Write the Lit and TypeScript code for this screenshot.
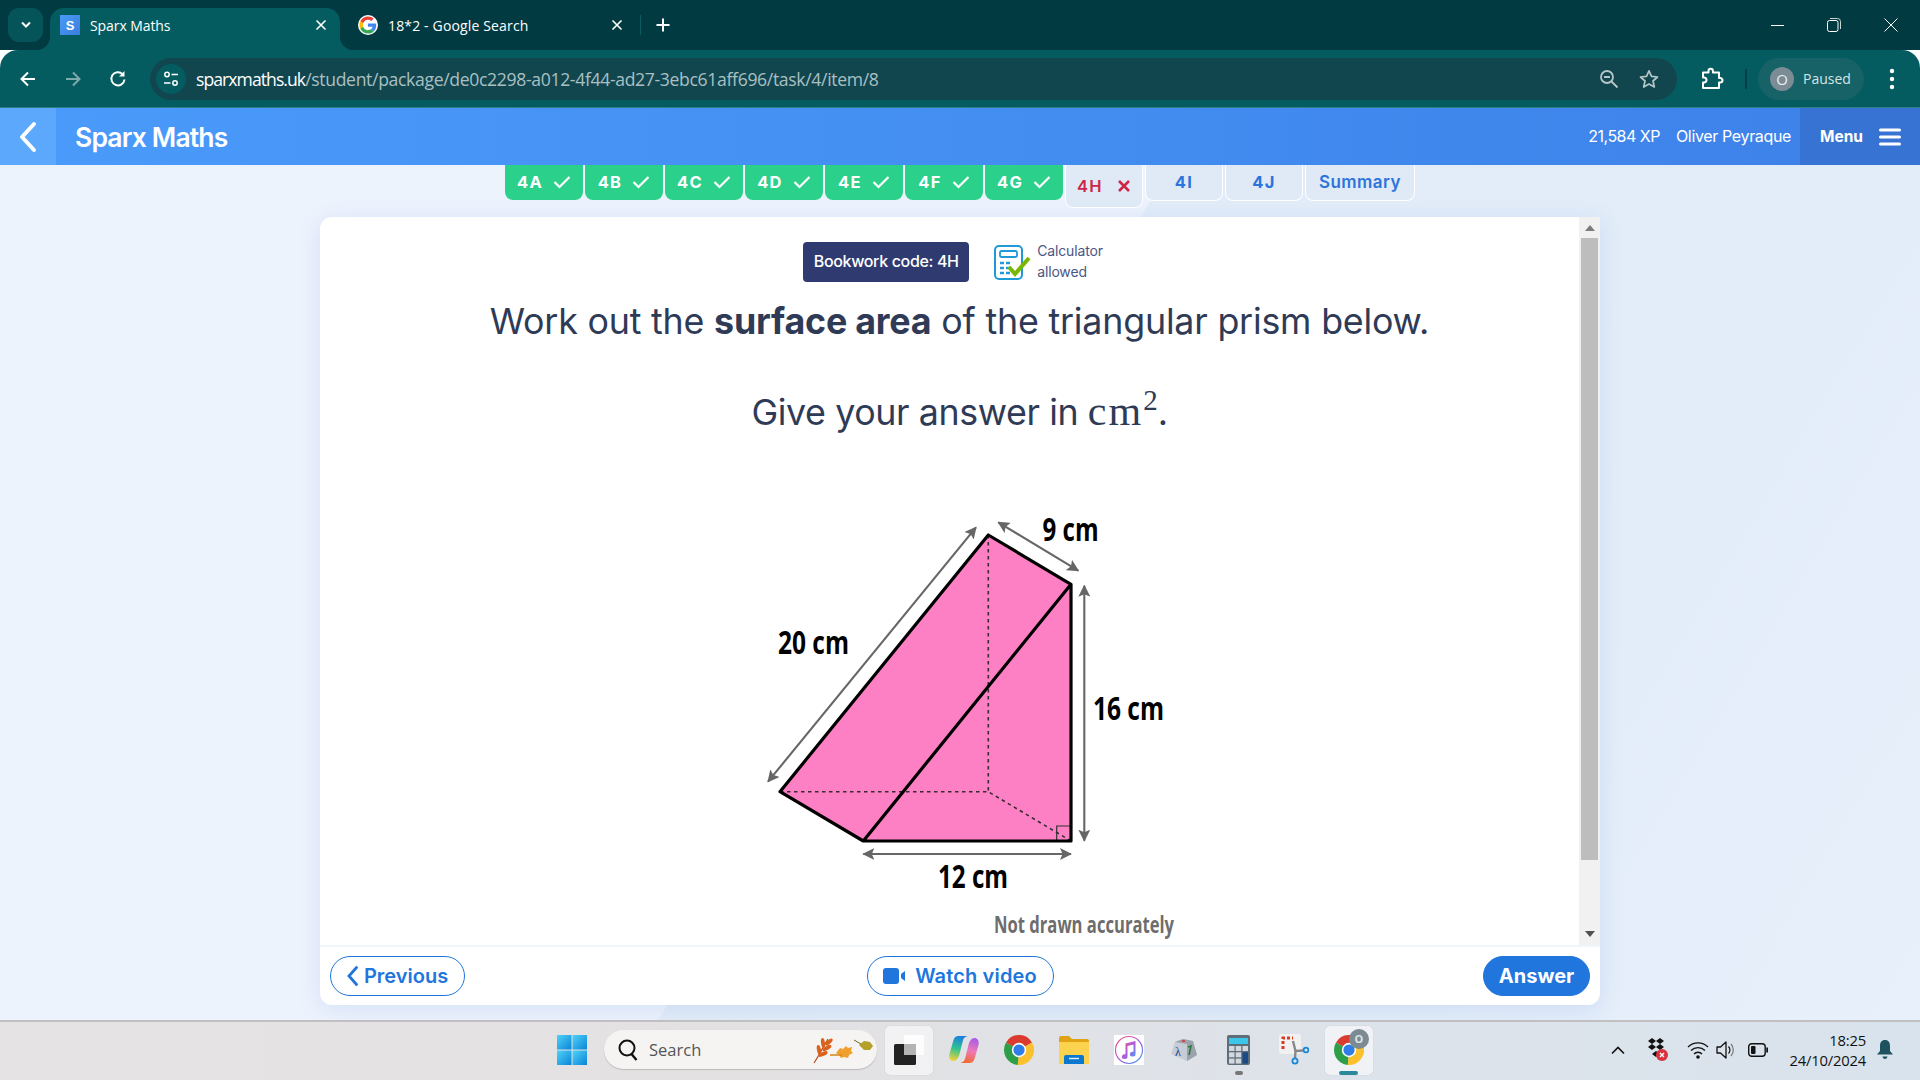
import { LitElement, html, css, svg } from "lit";
import { customElement } from "lit/decorators.js";

const CHROME_FONT = css`"Open Sans", "Noto Sans", sans-serif`;

const chromeLogo = (size: number) => html`<svg width=${size} height=${size} viewBox="0 0 48 48">
  <path fill="#db3b2f" d="M24 24 3.2 12A24 24 0 0 1 44.8 12Z"/>
  <path fill="#fbc02d" d="M24 24 44.8 12A24 24 0 0 1 22 47.9Z"/>
  <path fill="#2e9e48" d="M24 24 22 47.9A24 24 0 0 1 3.2 12Z"/>
  <circle cx="24" cy="24" r="11.5" fill="#fff"/><circle cx="24" cy="24" r="9" fill="#2f7de8"/></svg>`;

const googleG = html`<svg width="20" height="20" viewBox="-4 -4 56 56">
  <circle cx="24" cy="24" r="28" fill="#fff"/>
  <path fill="#EA4335" d="M24 9.5c3.54 0 6.71 1.22 9.21 3.6l6.85-6.85C35.9 2.38 30.47 0 24 0 14.62 0 6.51 5.38 2.56 13.22l7.98 6.19C12.43 13.72 17.74 9.5 24 9.5z"/>
  <path fill="#4285F4" d="M46.98 24.55c0-1.57-.15-3.09-.38-4.55H24v9.02h12.94c-.58 2.96-2.26 5.48-4.78 7.18l7.73 6c4.51-4.18 7.09-10.36 7.09-17.65z"/>
  <path fill="#FBBC05" d="M10.53 28.59c-.48-1.45-.76-2.99-.76-4.59s.27-3.14.76-4.59l-7.98-6.19C.92 16.46 0 20.12 0 24c0 3.88.92 7.54 2.56 10.78l7.97-6.19z"/>
  <path fill="#34A853" d="M24 48c6.48 0 11.93-2.13 15.89-5.81l-7.73-6c-2.15 1.45-4.92 2.3-8.16 2.3-6.26 0-11.57-4.22-13.47-9.91l-7.98 6.19C6.51 42.62 14.62 48 24 48z"/></svg>`;

const closeX = html`<svg width="12" height="12" viewBox="0 0 12 12"><path d="M1.5 1.5l9 9M10.5 1.5l-9 9" stroke="#fff" stroke-width="1.6" fill="none"/></svg>`;
const check = html`<svg width="18" height="14" viewBox="0 0 18 14"><path d="M1.5 7l5 5 10-10" stroke="#fff" stroke-width="2.2" fill="none"/></svg>`;

const arrowHead = svg`<marker id="ah" viewBox="0 0 12 12" refX="11" refY="6" markerWidth="12" markerHeight="12" markerUnits="userSpaceOnUse" orient="auto-start-reverse"><path d="M0 0 12 6 0 12 2.5 6Z" fill="#666"/></marker>`;

@customElement("app-root")
export class AppRoot extends LitElement {
  static styles = css`
    :host { display: block; width: 1920px; height: 1080px; overflow: hidden; font-family: Inter, "Liberation Sans", sans-serif; }
    * { box-sizing: border-box; }
    .page { width: 1920px; height: 1080px; display: flex; flex-direction: column; }
    svg { display: block; flex: none; }

    /* browser chrome */
    .strip { height: 50px; background: #023a42; display: flex; padding-top: 8px; color: #fff; font-family: ${CHROME_FONT}; font-size: 14px; flex: none; }
    .tabs-btn { width: 35px; height: 34px; margin-left: 8px; margin-right: 7px; background: #045459; border-radius: 11px; display: flex; align-items: center; justify-content: center; }
    .btab { width: 290px; height: 42px; display: flex; align-items: center; position: relative; padding: 0 13px 8px 10px; }
    .btab.on { background: #045c60; border-radius: 14px 14px 0 0; }
    .btab.on::before, .btab.on::after { content: ""; position: absolute; bottom: 0; width: 14px; height: 14px; }
    .btab.on::before { left: -14px; background: radial-gradient(circle at 0 0, transparent 14px, #045c60 14.5px); }
    .btab.on::after { right: -14px; background: radial-gradient(circle at 100% 0, transparent 14px, #045c60 14.5px); }
    .btab.two { width: 300px; padding: 0 17px 8px 18px; }
    .btab .label { margin-left: 10px; flex: 1; white-space: nowrap; letter-spacing: -0.08px; }
    .btab.two .label { letter-spacing: .15px; }
    .favs { width: 20px; height: 20px; background: linear-gradient(135deg,#4a9bf5,#3a7de0); color: #fff; font: 700 13px "Liberation Sans", sans-serif; display: flex; align-items: center; justify-content: center; }
    .tsep { width: 1px; height: 20px; background: #0d5a62; margin-top: 7px; }
    .plus { margin-left: 14px; height: 34px; display: flex; align-items: center; }
    .winctl { margin-left: auto; display: flex; height: 34px; align-items: center; padding-right: 22px; }
    .winctl svg { margin-left: 42px; }
    .winctl svg.cl { margin-left: 43px; }

    .toolbar { height: 58px; background: #045c60; border-radius: 18px 18px 0 0; border-bottom: 1px solid #2f7e85; display: flex; align-items: center; padding-left: 5px; color: #fff; font-family: ${CHROME_FONT}; flex: none; }
    .nav { width: 45px; display: flex; justify-content: center; }
    .omni { flex: 1; height: 42px; margin-left: 10px; background: #12464f; border-radius: 21px; display: flex; align-items: center; padding: 0 13px 0 6px; }
    .info { width: 30px; height: 30px; border-radius: 50%; background: #045c60; display: flex; align-items: center; justify-content: center; }
    .url { margin-left: 10px; padding-top: 1px; font-size: 17.6px; letter-spacing: -0.34px; color: #a9c0c3; white-space: nowrap; flex: 1; }
    .url b { font-weight: 400; color: #fff; letter-spacing: -0.95px; }
    .omni svg.o { margin-left: 14px; }
    .omni svg.star { margin-left: 20px; margin-right: 5px; }
    .tright { width: 243px; display: flex; align-items: center; padding-left: 23px; flex: none; }
    .vsep { width: 2px; height: 20px; background: #033f47; margin-left: 21px; margin-right: 11px; }
    .pill { width: 106px; height: 42px; background: #176267; border-radius: 21px; display: flex; align-items: center; padding-left: 12px; font-size: 14px; color: #d4e4e4; }
    .avatar { width: 24px; height: 24px; border-radius: 50%; background: #7b8c96; color: #e8eef0; display: flex; align-items: center; justify-content: center; font-size: 15px; margin-right: 9px; }
    .dots { margin-left: 25px; }

    /* app header */
    .header { height: 57px; flex: none; display: flex; align-items: center; color: #fff; background: linear-gradient(90deg, #4a9bfb, #3d81e8); }
    .hback { width: 56px; height: 57px; background: #5ba8fd; display: flex; align-items: center; justify-content: center; }
    .htitle { margin-left: 19px; font-size: 26.5px; font-weight: 600; letter-spacing: -0.85px; }
    .xp { margin-left: auto; font-size: 16px; letter-spacing: -0.5px; padding-bottom: 1px; }
    .who { margin-left: 16px; margin-right: 9px; font-size: 16px; letter-spacing: -0.35px; padding-bottom: 1px; }
    .menu { width: 120px; height: 57px; background: #3773d3; display: flex; align-items: center; padding-left: 20px; font-size: 15.5px; font-weight: 700; }
    .menu svg { margin-left: 16px; }

    /* main */
    .main { flex: 1; min-height: 0; display: flex; flex-direction: column; align-items: center; background: linear-gradient(121deg, #edf3fd 0%, #edf3fd 48.1%, #e2ecf8 48.2%, #e3edf9 80%, #e8f0fb 100%); }
    .qtabs { height: 52px; flex: none; display: flex; gap: 2px; align-items: flex-start; }
    .qt { width: 78px; height: 35px; border-radius: 0 0 8px 8px; display: flex; align-items: center; justify-content: center; gap: 10px; font-size: 16.5px; font-weight: 700; letter-spacing: 1.3px; }
    .qt.done { background: #2bd08a; color: #fff; padding-bottom: 2px; }
    .qt.todo { background: #dfeaf6; color: #2c74dc; height: 36px; border: 1px solid #fff; border-top: none; padding-bottom: 2px; }
    .qt.sum { width: 110px; letter-spacing: .45px; font-weight: 600; font-size: 17px; }
    .qt.act { background: #dfeaf6; color: #cf2547; height: 43px; border: 1px solid #fff; border-top: none; gap: 14px; font-weight: 600; }

    .card { width: 1280px; height: 788px; flex: none; background: #fff; border-radius: 12px 0 12px 12px; box-shadow: 0 4px 22px rgba(90,130,220,.16); display: flex; flex-direction: column; overflow: hidden; }
    .scrollwrap { height: 728px; flex: none; display: flex; }
    .content { flex: 1; min-width: 0; padding: 25px 0 0 20px; display: flex; flex-direction: column; align-items: center; color: #2f3b56; }
    .meta { height: 40px; flex: none; display: flex; align-items: center; margin-right: 13px; }
    .code { width: 166px; height: 40px; background: #2f3b70; border-radius: 4px; color: #fff; font-size: 16px; font-weight: 500; letter-spacing: -0.35px; display: flex; align-items: center; justify-content: center; padding-bottom: 2px; }
    .calc { margin-left: 25px; }
    .calctxt { margin-left: 6px; font-size: 14px; line-height: 21px; color: #4c5684; letter-spacing: -0.15px; padding-bottom: 2px; }
    .q { margin: 0; font-size: 35.8px; line-height: 46px; white-space: nowrap; letter-spacing: -0.2px; font-weight: 400; }
    .q.one { margin-top: 16px; }
    .q.two { margin-top: 44px; letter-spacing: -0.4px; }
    .q b { font-weight: 700; }
    .math { font-family: "Liberation Serif", serif; font-size: 42px; letter-spacing: 2px; }
    .math sup { font-size: 29px; line-height: 0; vertical-align: 15px; letter-spacing: 0; }
    .fig { margin: 65px 0 0 101px; }
    .fig text { font-family: "Open Sans", sans-serif; font-weight: 700; }

    .sbar { width: 21px; flex: none; background: #f1f1f1; display: flex; flex-direction: column; align-items: center; }
    .sbar .up, .sbar .dn { height: 21px; display: flex; align-items: center; justify-content: center; flex: none; }
    .thumb { width: 17px; height: 622px; background: #bdbdbd; flex: none; }
    .sbar .dn { margin-top: auto; height: 22px; }

    .foot { height: 60px; flex: none; border-top: 2px solid #f0f4fc; display: grid; grid-template-columns: 1fr auto 1fr; align-items: center; padding: 0 10px; font-size: 20px; font-weight: 600; }
    .btn { height: 40px; border: 1px solid #2076dd; border-radius: 20px; color: #2076dd; display: flex; align-items: center; justify-content: center; background: #fff; }
    .prev { width: 135px; gap: 6px; justify-self: start; }
    .watch { width: 187px; gap: 9px; letter-spacing: .15px; }
    .ans { width: 107px; background: #2076dd; color: #fff; justify-self: end; font-weight: 700; }

    /* taskbar */
    .task { height: 60px; flex: none; border-top: 2px solid #c0c0c2; background: linear-gradient(90deg, #e5e3e3 0%, #e3e1e2 40%, #dde3ea 70%, #d9e3ed 100%); display: flex; align-items: center; padding: 0 0 3px 557px; font-family: ${CHROME_FONT}; color: #111; }
    .search { width: 273px; height: 39px; margin-left: 17px; margin-right: 4px; background: #f6f4f3; border-radius: 20px; box-shadow: 0 1px 1px rgba(0,0,0,.18); display: flex; align-items: center; padding-left: 14px; font-size: 16.5px; color: #555; position: relative; }
    .search span { margin-left: 11px; }
    .search svg.lf { position: absolute; right: 3px; top: 6px; }
    .slot { width: 55px; height: 58px; display: flex; align-items: center; justify-content: center; position: relative; flex: none; }
    .slot.tile::before { content: ""; position: absolute; left: 3.5px; right: 3.5px; top: 5px; bottom: 4px; background: rgba(255,255,255,.55); border-radius: 5px; box-shadow: 0 0 1px rgba(0,0,0,.2); }
    .slot svg { position: relative; }
    .run { position: absolute; left: 23.5px; bottom: 4px; width: 8px; height: 4px; border-radius: 2px; background: #777; }
    .run.act { left: 18px; width: 19px; background: #2a8a9a; }
    .badge { position: absolute; left: 28px; top: 8px; width: 20px; height: 20px; border-radius: 50%; background: #7c8a92; color: #dde5e8; font: 700 11px "Open Sans", sans-serif; display: flex; align-items: center; justify-content: center; }
    .tray { margin-left: auto; margin-right: 23px; display: flex; align-items: center; height: 55px; }
    .ti { display: flex; align-items: center; justify-content: center; flex: none; }
    .ti.w40 { width: 40px; }
    .ti.w28 { width: 28px; }
    .ti.wifi { margin-left: 6px; }
    .ti.bat { margin-left: 4px; }
    .ti.bell { width: 24px; margin-left: 7px; }
    .clock { width: 94px; text-align: right; font-size: 14.8px; line-height: 20px; letter-spacing: -0.2px; color: #111; }
  `;

  private tab(name: string) {
    return html`<div class="qt done">${name}${check}</div>`;
  }

  render() {
    return html`<div class="page">
      <div class="strip">
        <div class="tabs-btn"><svg width="12" height="8" viewBox="0 0 12 8"><path d="M2 1.5l4 4 4-4" stroke="#fff" stroke-width="2" fill="none"/></svg></div>
        <div class="btab on"><div class="favs">S</div><div class="label">Sparx Maths</div>${closeX}</div>
        <div class="btab two">${googleG}<div class="label">18*2 - Google Search</div>${closeX}</div>
        <div class="tsep"></div>
        <div class="plus"><svg width="16" height="16" viewBox="0 0 16 16"><path d="M8 1.500v13M1.500 8h13" stroke="#fff" stroke-width="2" fill="none"/></svg></div>
        <div class="winctl">
          <svg width="14" height="14" viewBox="0 0 14 14"><path d="M0 7.500h13" stroke="#fff" fill="none"/></svg>
          <svg width="14" height="14" viewBox="0 0 14 14"><rect x=".5" y="2.500" width="10.500" height="11" rx="2" stroke="#fff" fill="none"/><path d="M3 .5h7.500a3 3 0 0 1 3 3V11" stroke="#c9d6d6" fill="none"/></svg>
          <svg class="cl" width="14" height="14" viewBox="0 0 14 14"><path d="M.5.5l13 13M13.500.5l-13 13" stroke="#fff" fill="none"/></svg>
        </div>
      </div>

      <div class="toolbar">
        <div class="nav"><svg width="18" height="18" viewBox="0 0 18 18"><path d="M16 9H2.500M9 2.500 2.500 9 9 15.500" stroke="#fff" stroke-width="2" fill="none"/></svg></div>
        <div class="nav"><svg width="18" height="18" viewBox="0 0 18 18"><path d="M2 9h13.500M9 2.500 15.500 9 9 15.500" stroke="#7faaac" stroke-width="2" fill="none"/></svg></div>
        <div class="nav"><svg width="18" height="18" viewBox="0 0 18 18"><path d="M15.500 9.500A6.600 6.600 0 1 1 13.500 4" stroke="#fff" stroke-width="2" fill="none"/><path d="M15.500 1v5.500H10z" fill="#fff"/></svg></div>
        <div class="omni">
          <div class="info"><svg width="16" height="16" viewBox="0 0 16 16"><circle cx="4" cy="3.500" r="2.200" stroke="#fff" stroke-width="1.500" fill="none"/><path d="M8.500 3.500H15M1 12h6.500" stroke="#fff" stroke-width="1.500"/><circle cx="12" cy="12" r="2.200" stroke="#fff" stroke-width="1.500" fill="none"/></svg></div>
          <div class="url"><b>sparxmaths.uk</b>/student/package/de0c2298-a012-4f44-ad27-3ebc61aff696/task/4/item/8</div>
          <svg class="o" width="20" height="20" viewBox="0 0 20 20"><circle cx="8" cy="8" r="6" stroke="#b5c6c7" stroke-width="1.800" fill="none"/><path d="M5 8h6M12.500 12.500 18.500 18.500" stroke="#b5c6c7" stroke-width="1.800"/></svg>
          <svg class="o star" width="20" height="20" viewBox="0 0 20 20"><path d="M10 1.800l2.500 5.500 6 .7-4.500 4 1.300 6L10 15l-5.300 3 1.300-6-4.500-4 6-.7z" stroke="#b5c6c7" stroke-width="1.700" fill="none" stroke-linejoin="round"/></svg>
        </div>
        <div class="tright">
          <svg width="24" height="24" viewBox="0 0 24 24"><path d="M3 5.500h5.500V4a2.200 2.200 0 0 1 4.400 0v1.500H19V11h1.200a2.300 2.300 0 0 1 0 4.600H19V21H3v-5.500h1.400a2.600 2.600 0 0 0 0-5.100H3z" stroke="#fff" stroke-width="2" fill="none" stroke-linejoin="round"/></svg>
          <div class="vsep"></div>
          <div class="pill"><div class="avatar">O</div>Paused</div>
          <svg class="dots" width="6" height="22" viewBox="0 0 6 22"><circle cx="3" cy="3" r="2.200" fill="#fff"/><circle cx="3" cy="11" r="2.200" fill="#fff"/><circle cx="3" cy="19" r="2.200" fill="#fff"/></svg>
        </div>
      </div>

      <div class="header">
        <div class="hback"><svg width="18" height="32" viewBox="0 0 18 32"><path d="M15 3 3 16l12 13" stroke="#fff" stroke-width="4" stroke-linecap="round" stroke-linejoin="round" fill="none"/></svg></div>
        <div class="htitle">Sparx Maths</div>
        <div class="xp">21,584 XP</div>
        <div class="who">Oliver Peyraque</div>
        <div class="menu">Menu<svg width="22" height="18" viewBox="0 0 22 18"><path d="M1.500 2h19M1.500 9h19M1.500 16h19" stroke="#fff" stroke-width="3" stroke-linecap="round"/></svg></div>
      </div>

      <div class="main">
        <div class="qtabs">
          ${["4A","4B","4C","4D","4E","4F","4G"].map((n) => this.tab(n))}
          <div class="qt act">4H<svg width="14" height="14" viewBox="0 0 14 14"><path d="M2 2l10 10M12 2 2 12" stroke="#cf2547" stroke-width="2.600"/></svg></div>
          <div class="qt todo">4I</div>
          <div class="qt todo">4J</div>
          <div class="qt todo sum">Summary</div>
        </div>

        <div class="card">
          <div class="scrollwrap">
            <div class="content">
              <div class="meta">
                <div class="code">Bookwork code: 4H</div>
                <svg class="calc" width="37" height="35" viewBox="0 0 37 35">
                  <rect x="1" y="1" width="27" height="33" rx="4" fill="#fff" stroke="#1f9ad6" stroke-width="2"/>
                  <rect x="6" y="6" width="17" height="6" rx="1.500" fill="none" stroke="#1f9ad6" stroke-width="1.800"/>
                  <path d="M6 18h4M12 18h4M6 23h4M12 23h4M6 28h4M12 28h4" stroke="#1f9ad6" stroke-width="2.500"/>
                  <path d="M15 22l6 7L35 13" stroke="#7ab800" stroke-width="4" fill="none"/>
                </svg>
                <div class="calctxt">Calculator<br>allowed</div>
              </div>
              <p class="q one">Work out the <b>surface area</b> of the triangular prism below.</p>
              <p class="q two">Give your answer in <span class="math">cm<sup>2</sup></span>.</p>
              <svg class="fig" width="500" height="445" viewBox="760 500 500 445">
                <defs>${arrowHead}</defs>
                <path d="M988.300 535 1071 584.300V841H863.300L780 791.700Z" fill="#fd80c5"/>
                <path d="M988.300 535V791.700M780 791.700H988.300L1071 841" stroke="#3a2a33" stroke-width="1.600" stroke-dasharray="3.500 3.500" fill="none"/>
                <path d="M1056.700 841V826H1070" stroke="#333" stroke-width="1.200" fill="none"/>
                <path d="M988.300 535 1071 584.300V841H863.300L780 791.700ZM1071 584.300 863.300 841" stroke="#000" stroke-width="3.200" stroke-linejoin="round" fill="none"/>
                <g stroke="#666" stroke-width="2.100" fill="none">
                  <path d="M768 781.700 976 527.300" marker-start="url(#ah)" marker-end="url(#ah)"/>
                  <path d="M998.300 522.300 1078.300 570.700" marker-start="url(#ah)" marker-end="url(#ah)"/>
                  <path d="M1084.300 585.700V840.700" marker-start="url(#ah)" marker-end="url(#ah)"/>
                  <path d="M863.300 854H1071" marker-start="url(#ah)" marker-end="url(#ah)"/>
                </g>
                <g fill="#000" font-size="32">
                  <text x="1042.500" y="540.700" textLength="56" lengthAdjust="spacingAndGlyphs">9 cm</text>
                  <text x="778" y="654" textLength="71" lengthAdjust="spacingAndGlyphs">20 cm</text>
                  <text x="1093" y="720" textLength="71" lengthAdjust="spacingAndGlyphs">16 cm</text>
                  <text x="938" y="888" textLength="70" lengthAdjust="spacingAndGlyphs">12 cm</text>
                </g>
                <text x="994" y="933" font-size="23" fill="#6d6d6d" textLength="180" lengthAdjust="spacingAndGlyphs">Not drawn accurately</text>
              </svg>
            </div>
            <div class="sbar">
              <div class="up"><svg width="10" height="6" viewBox="0 0 10 6"><path d="M5 0l5 6H0z" fill="#7b7b7b"/></svg></div>
              <div class="thumb"></div>
              <div class="dn"><svg width="10" height="6" viewBox="0 0 10 6"><path d="M0 0h10L5 6z" fill="#505050"/></svg></div>
            </div>
          </div>
          <div class="foot">
            <div class="btn prev"><svg width="11" height="20" viewBox="0 0 11 20"><path d="M9.500 1.500 2 10l7.500 8.500" stroke="#2076dd" stroke-width="2.800" fill="none" stroke-linecap="round"/></svg>Previous</div>
            <div class="btn watch"><svg width="23" height="16" viewBox="0 0 23 16"><rect width="16" height="16" rx="3" fill="#2076dd"/><path d="M18 6l4-3v10l-4-3z" fill="#2076dd"/></svg>Watch video</div>
            <div class="btn ans">Answer</div>
          </div>
        </div>
      </div>

      <div class="task">
        <svg width="30" height="30" viewBox="0 0 30 30"><defs><linearGradient id="w" x1="0" y1="0" x2="1" y2="1"><stop offset="0" stop-color="#4fd3f7"/><stop offset="1" stop-color="#0a84d8"/></linearGradient></defs><rect width="14.500" height="14.500" fill="url(#w)"/><rect x="15.500" width="14.500" height="14.500" fill="url(#w)"/><rect y="15.500" width="14.500" height="14.500" fill="url(#w)"/><rect x="15.500" y="15.500" width="14.500" height="14.500" fill="url(#w)"/></svg>
        <div class="search">
          <svg width="20" height="22" viewBox="0 0 20 22"><circle cx="9" cy="9" r="7.500" stroke="#111" stroke-width="2" fill="none"/><path d="M13.500 15 18.500 21" stroke="#111" stroke-width="2.400"/></svg>
          <span>Search</span>
          <svg class="lf" width="62" height="28" viewBox="0 0 62 28">
            <path d="M2 27C8 18 11 11 16 3" stroke="#b8481a" stroke-width="1.200" fill="none"/>
            <g fill="#d9631e"><ellipse cx="11" cy="7" rx="2" ry="5" transform="rotate(-8 11 7)"/><ellipse cx="7" cy="14" rx="2" ry="5" transform="rotate(-12 7 14)"/><ellipse cx="17" cy="6" rx="2" ry="4.500" transform="rotate(50 17 6)"/><ellipse cx="15" cy="12" rx="2" ry="5" transform="rotate(60 15 12)"/><ellipse cx="11" cy="18" rx="2" ry="5" transform="rotate(65 11 18)"/></g>
            <path d="M24 17l4-5 3 1 3-3 2 2 4-1-1 4 2 2-4 2-1 3-4-1-3 1-2-3z" fill="#f0a02c"/><path d="M18 19h12" stroke="#d9841c" stroke-width="1.500"/>
            <path d="M47 9l5-4 6 1 3 4-3 4-6 0z" fill="#b5a02a"/><path d="M42 4l7 4" stroke="#6f6a1a"/>
          </svg>
        </div>
        <div class="slot tile"><svg width="30" height="30" viewBox="0 0 30 30"><rect x="10" y="0" width="20" height="20" fill="#fff" opacity=".85"/><rect x="0" y="9" width="22" height="21" rx="1.500" fill="#222"/><rect x="10" y="9" width="12" height="11" fill="#b4b4b4"/></svg></div>
        <div class="slot"><svg width="30" height="27" viewBox="0 0 30 27"><defs><linearGradient id="c1" x1=".5" y1="0" x2=".3" y2="1"><stop offset="0" stop-color="#1b7fe0"/><stop offset=".5" stop-color="#2fc28f"/><stop offset="1" stop-color="#f0d23a"/></linearGradient><linearGradient id="c2" x1=".6" y1="0" x2=".4" y2="1"><stop offset="0" stop-color="#a85be6"/><stop offset=".5" stop-color="#ee78b8"/><stop offset="1" stop-color="#f26b2e"/></linearGradient></defs>
          <path d="M9.500 0H19C15.500.5 14.500 2.500 13.800 5L10.500 18c-.9 4-3 7-6 7C1.200 25-.5 21.500.6 17.500L4.500 4C5.300 1.500 7 0 9.500 0z" fill="url(#c1)"/>
          <path d="M20.500 27H11c3.500-.5 4.500-2.500 5.200-5l3.300-13c.9-4 3-7 6-7 3.300 0 5 3.500 3.900 7.500L25.500 23c-.8 2.500-2.500 4-5 4z" fill="url(#c2)"/></svg></div>
        <div class="slot">${chromeLogo(30)}</div>
        <div class="slot"><svg width="30" height="28" viewBox="0 0 30 28"><path d="M0 2a2 2 0 0 1 2-2h8l3 3h15a2 2 0 0 1 2 2v4H0z" fill="#e0a315"/><path d="M0 6h30v22H0z" fill="#fcd34f"/><path d="M5 21a2 2 0 0 1 2-2h16a2 2 0 0 1 2 2v7H5z" fill="#0a78d0"/><path d="M10 22.500h10" stroke="#e4f2ff" stroke-width="1.400"/></svg></div>
        <div class="slot"><svg width="30" height="30" viewBox="0 0 30 30"><defs><linearGradient id="it" x1="0" y1="0" x2="1" y2="1"><stop offset="0" stop-color="#f5566f"/><stop offset=".5" stop-color="#b15ae0"/><stop offset="1" stop-color="#3aa4f4"/></linearGradient></defs><rect width="30" height="30" fill="#fff"/><circle cx="15" cy="15" r="13.500" fill="none" stroke="url(#it)" stroke-width="1.200"/><path d="M11.500 8.500 21.500 6V19a2.800 2.400 0 1 1-2-2.200V9.500l-6 1.500V21.500a2.800 2.400 0 1 1-2-2.200z" fill="url(#it)"/></svg></div>
        <div class="slot"><svg width="28" height="24" viewBox="0 0 28 24"><path d="M1 16 5 4l8-3 10 2 4 14-10 6z" fill="#c5ccd6"/><path d="M5 4l8-3 10 2-6 3zM17 6l6-3 4 14-10 6z" fill="#9aa3ad"/><text x="5" y="18" font-size="12" fill="#23408f" font-family="'Liberation Serif',serif">λ</text><path d="M18 9l3-1-2 9" stroke="#2f7a3a" stroke-width="1.600" fill="none"/><path d="M12 3h3" stroke="#c33" stroke-width="1.500"/></svg></div>
        <div class="slot"><svg width="23" height="30" viewBox="0 0 23 30"><rect width="23" height="30" rx="2" fill="#5f6d79"/><rect x="2" y="3" width="19" height="6" fill="#3cc7ea"/><g fill="#d2d8de"><rect x="2" y="11" width="5.500" height="5"/><rect x="8.700" y="11" width="5.500" height="5"/><rect x="15.500" y="11" width="5.500" height="5"/><rect x="2" y="17.300" width="5.500" height="5"/><rect x="8.700" y="17.300" width="5.500" height="5"/><rect x="2" y="23.600" width="5.500" height="5"/><rect x="8.700" y="23.600" width="5.500" height="5"/></g><rect x="15.500" y="17.300" width="5.500" height="11.300" fill="#1a4a8a"/></svg><div class="run"></div></div>
        <div class="slot"><svg width="30" height="32" viewBox="0 0 30 32"><rect x="0" y="0" width="22" height="20" rx="3" fill="#f1f1f1"/><path d="M4 15V4h10" stroke="#d9381e" stroke-width="3" stroke-dasharray="3 2" fill="none"/><path d="M14 7 16.500 17 16 24M16.500 17 24 16.500" stroke="#888" stroke-width="2.400" fill="none"/><circle cx="27" cy="16" r="2.400" fill="none" stroke="#1b87d6" stroke-width="1.800"/><circle cx="16" cy="27" r="2.600" fill="none" stroke="#1b87d6" stroke-width="1.800"/></svg></div>
        <div class="slot tile">${chromeLogo(30)}<div class="badge">O</div><div class="run act"></div></div>

        <div class="tray">
          <div class="ti w40"><svg width="16" height="10" viewBox="0 0 16 10"><path d="M2 8.500l6-6 6 6" stroke="#111" stroke-width="1.600" fill="none"/></svg></div>
          <div class="ti w40"><svg width="22" height="24" viewBox="0 0 22 24"><g fill="#111"><path d="M5 0l4 3-4 3-4-3zM13 0l4 3-4 3-4-3zM5 6l4 3-4 3-4-3zM13 6l4 3-4 3-4-3zM9 13l4 3-4 3-4-3z"/></g><circle cx="15" cy="17" r="6" fill="#d9333f"/><path d="M13 15l4 4M17 15l-4 4" stroke="#fff" stroke-width="1.400"/></svg></div>
          <div class="ti w28 wifi"><svg width="22" height="20" viewBox="0 0 22 20"><g stroke="#111" stroke-width="1.300" fill="none"><path d="M1 7a14 14 0 0 1 20 0"/><path d="M4 10.500a10 10 0 0 1 14 0"/><path d="M7 14a5.500 5.500 0 0 1 8 0"/></g><circle cx="11" cy="17" r="1.800" fill="#111"/></svg></div>
          <div class="ti w28"><svg width="20" height="20" viewBox="0 0 20 20"><path d="M1 7h3.500L10 2v16l-5.500-5H1z" stroke="#111" stroke-width="1.300" fill="none" stroke-linejoin="round"/><path d="M12.500 6.500a5 5 0 0 1 0 7" stroke="#111" stroke-width="1.200" fill="none"/><path d="M15 4a9 9 0 0 1 0 12" stroke="#777" stroke-width="1.200" fill="none"/></svg></div>
          <div class="ti w28 bat"><svg width="20" height="14" viewBox="0 0 20 14"><rect x=".7" y=".7" width="16.500" height="12.600" rx="3" stroke="#111" stroke-width="1.400" fill="none"/><rect x="3" y="3" width="4.500" height="8" rx="1" fill="#111"/><rect x="18.300" y="4.500" width="1.700" height="5" fill="#111"/></svg></div>
          <div class="clock">18:25<br>24/10/2024</div>
          <div class="ti bell"><svg width="18" height="20" viewBox="0 0 18 20"><path d="M9 0c3.500 0 5 2.500 5 6v5l3 3.500H1L4 11V6c0-3.500 1.500-6 5-6z" fill="#1d5261"/><path d="M6.500 16.500h5a2.500 2.500 0 0 1-5 0z" fill="#1d5261"/></svg></div>
        </div>
      </div>
    </div>`;
  }
}
